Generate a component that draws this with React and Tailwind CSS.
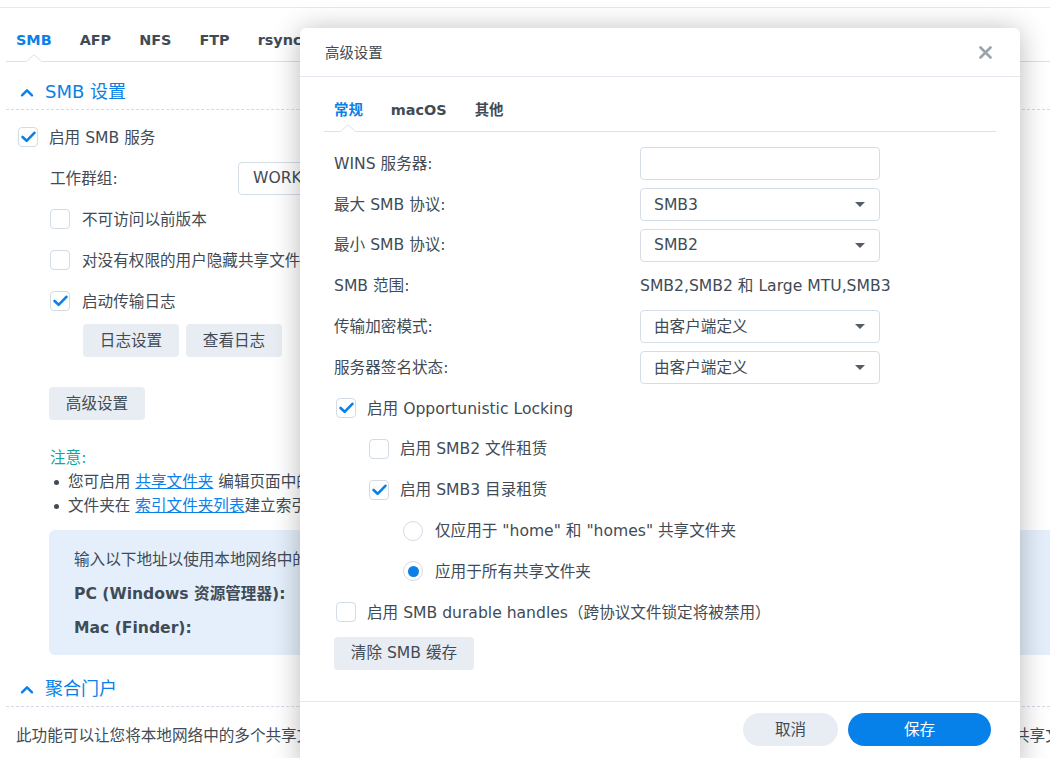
import React from "react";

function CheckMark() {
  return (
    <svg width="15" height="12" viewBox="0 0 15 12">
      <path d="M1.6 6 L5.6 9.8 L13.4 1.8" fill="none" stroke="#0a80e8" strokeWidth="2.6" strokeLinecap="round" strokeLinejoin="round" />
    </svg>
  );
}

function Checkbox({ checked }) {
  return (
    <span className="w-[20px] h-[20px] shrink-0 rounded-[4px] border border-[#d3dbe5] bg-white flex items-center justify-center">
      {checked && <CheckMark />}
    </span>
  );
}

function Radio({ checked }) {
  return (
    <span className="w-[20px] h-[20px] shrink-0 rounded-full border border-[#d3dbe5] bg-white flex items-center justify-center">
      {checked && <span className="w-[11px] h-[11px] rounded-full bg-[#0a80e8]" />}
    </span>
  );
}

function Caret() {
  return (
    <svg width="10" height="5" viewBox="0 0 10 5">
      <path d="M0 0 H10 L5 5 Z" fill="#545d67" />
    </svg>
  );
}

function Select({ value }) {
  return (
    <div className="w-[240px] h-[33px] rounded-[4px] border border-[#d5dde6] flex items-center justify-between pl-[13px] pr-[14px]">
      <span className="pt-[2px]">{value}</span>
      <Caret />
    </div>
  );
}

function Notch() {
  return (
    <svg className="absolute bottom-[-1px] left-1/2 -translate-x-1/2" width="16" height="8" viewBox="0 0 16 8">
      <rect x="0" y="6" width="16" height="2" fill="#ffffff" />
      <path d="M0.5 7.5 L8 0.8 L15.5 7.5" fill="#ffffff" stroke="#d9e1ea" strokeWidth="1" />
    </svg>
  );
}

function Chevron() {
  return (
    <svg width="14" height="9" viewBox="0 0 14 9">
      <path d="M2 7.3 L7 2.3 L12 7.3" fill="none" stroke="#0a80e8" strokeWidth="2.4" strokeLinecap="round" strokeLinejoin="round" />
    </svg>
  );
}

function SectionHeader({ title, height }) {
  return (
    <div className={"flex items-end pb-[5px] pl-[14px] gap-[11px] border-b border-dashed border-[#d2dae4] " + height}>
      <span className="h-[24px] flex items-center">
        <Chevron />
      </span>
      <span className="text-[18px] leading-[24px] text-[#0a80e8]">{title}</span>
    </div>
  );
}

function GrayButton({ children }) {
  return (
    <button className="h-[33px] w-[96px] pt-[2px] rounded-[4px] bg-[#e8edf3] text-[#414b55] flex items-center justify-center">
      {children}
    </button>
  );
}

function CheckRow({ checked, children, className }) {
  return (
    <div className={"h-[34px] flex items-center " + (className || "")}>
      <Checkbox checked={checked} />
      <span className="whitespace-nowrap pt-[3px]">{children}</span>
    </div>
  );
}

function BackgroundPage() {
  const tabs = ["SMB", "AFP", "NFS", "FTP", "rsync"];
  return (
    <div>
      <div className="h-[8px] border-b border-[#e6eaef]" />
      <div className="pl-[6px]">
        <div className="flex h-[54px] border-b border-[#d9e1ea] pl-[10px] gap-[28px] font-bold text-[14.4px]">
          {tabs.map((t, i) => (
            <div key={t} className={"relative pt-[21px] leading-[22px] " + (i === 0 ? "text-[#0a80e8]" : "text-[#414b55]")}>
              {t}
              {i === 0 && <Notch />}
            </div>
          ))}
        </div>

        <SectionHeader title="SMB 设置" height="h-[48px]" />

        <div className="pt-[10px] flex flex-col gap-[7px]">
          <CheckRow checked className="pl-[12px] gap-[11px]">启用 SMB 服务</CheckRow>
          <div className="h-[34px] flex items-center pl-[44px]">
            <span className="w-[188px] pt-[3px]">工作群组:</span>
            <div className="h-[33px] w-[400px] pt-[2px] rounded-[4px] border border-[#d5dde6] flex items-center pl-[14px]">WORKGROUP</div>
          </div>
          <CheckRow className="pl-[44px] gap-[12px]">不可访问以前版本</CheckRow>
          <CheckRow className="pl-[44px] gap-[12px]">对没有权限的用户隐藏共享文件夹</CheckRow>
          <CheckRow checked className="pl-[44px] gap-[12px]">启动传输日志</CheckRow>
        </div>

        <div className="mt-[6px] pl-[77px] flex gap-[7px]">
          <GrayButton>日志设置</GrayButton>
          <GrayButton>查看日志</GrayButton>
        </div>

        <div className="mt-[30px] pl-[43px]">
          <GrayButton>高级设置</GrayButton>
        </div>

        <div className="mt-[26px] pl-[44px] leading-[24px]">
          <div className="text-[#12a6a0]">注意:</div>
          <ul className="whitespace-nowrap">
            <li className="flex items-center">
              <span className="w-[5px] h-[5px] rounded-full bg-[#414b55] ml-[4px] mr-[9px]" />
              您可启用&nbsp;<a className="text-[#0a80e8] underline">共享文件夹</a>&nbsp;编辑页面中的高级权限，以便控制用户访问。
            </li>
            <li className="flex items-center">
              <span className="w-[5px] h-[5px] rounded-full bg-[#414b55] ml-[4px] mr-[9px]" />
              文件夹在&nbsp;<a className="text-[#0a80e8] underline">索引文件夹列表</a>建立索引后方可搜索。
            </li>
          </ul>
        </div>

        <div className="mt-[12px] ml-[43px] h-[125px] rounded-l-[6px] bg-[#e4effb] pt-[18px] pl-[25px] flex flex-col gap-[10px] leading-[24px] whitespace-nowrap">
          <div>输入以下地址以使用本地网络中的计算机访问共享文件夹：</div>
          <div className="font-bold">PC (Windows 资源管理器):</div>
          <div className="font-bold">Mac (Finder):</div>
        </div>

        <SectionHeader title="聚合门户" height="h-[52px]" />

        <div className="mt-[17px] pl-[10px] leading-[24px] whitespace-nowrap">
          此功能可以让您将本地网络中的多个共享文件夹整合到一个共享文件夹中。用户访问该入口，即可浏览来自多台服务器的文件，无需分别登录各个共享文件夹。
        </div>
      </div>
    </div>
  );
}

function FormRow({ label, children }) {
  return (
    <div className="h-[33px] flex items-center">
      <span className="w-[306px] shrink-0 pt-[2px]">{label}</span>
      {children}
    </div>
  );
}

function DialogCheck({ checked, indent, children }) {
  return (
    <div className={"h-[33px] flex items-center gap-[11px] " + indent}>
      <Checkbox checked={checked} />
      <span className="whitespace-nowrap pt-[2px]">{children}</span>
    </div>
  );
}

function DialogRadio({ checked, children }) {
  return (
    <div className="h-[33px] flex items-center gap-[12px] pl-[69px]">
      <Radio checked={checked} />
      <span className="whitespace-nowrap pt-[2px]">{children}</span>
    </div>
  );
}

function AdvancedDialog() {
  const tabs = ["常规", "macOS", "其他"];
  return (
    <div className="absolute left-[300px] top-[28px] w-[720px] h-[740px] bg-white rounded-t-[6px] shadow-[0_2px_28px_rgba(0,0,0,0.28)] flex flex-col">
      <div className="h-[49px] shrink-0 border-b border-[#e3e8ee] flex items-center justify-between pl-[25px] pr-[28px]">
        <span className="text-[14.4px] text-[#414b55] pt-[3px]">高级设置</span>
        <svg width="13" height="13" viewBox="0 0 13 13">
          <path d="M1.5 1.5 L11.5 11.5 M11.5 1.5 L1.5 11.5" stroke="#9aa2ab" strokeWidth="2.6" strokeLinecap="round" />
        </svg>
      </div>

      <div className="flex-1 px-[24px]">
        <div className="flex h-[55px] border-b border-[#d9e1ea] pl-[10px] gap-[28px] font-bold text-[14.4px]">
          {tabs.map((t, i) => (
            <div key={t} className={"relative pt-[22px] leading-[22px] " + (i === 0 ? "text-[#0a80e8]" : "text-[#414b55]")}>
              {t}
              {i === 0 && <Notch />}
            </div>
          ))}
        </div>

        <div className="mt-[15px] pl-[10px] flex flex-col gap-[7.8px]">
          <FormRow label="WINS 服务器:">
            <div className="w-[240px] h-[33px] rounded-[4px] border border-[#d5dde6]" />
          </FormRow>
          <FormRow label="最大 SMB 协议:">
            <Select value="SMB3" />
          </FormRow>
          <FormRow label="最小 SMB 协议:">
            <Select value="SMB2" />
          </FormRow>
          <FormRow label="SMB 范围:">
            <span className="whitespace-nowrap pt-[2px]">SMB2,SMB2 和 Large MTU,SMB3</span>
          </FormRow>
          <FormRow label="传输加密模式:">
            <Select value="由客户端定义" />
          </FormRow>
          <FormRow label="服务器签名状态:">
            <Select value="由客户端定义" />
          </FormRow>

          <DialogCheck checked indent="pl-[2px]">启用 Opportunistic Locking</DialogCheck>
          <DialogCheck indent="pl-[35px]">启用 SMB2 文件租赁</DialogCheck>
          <DialogCheck checked indent="pl-[35px]">启用 SMB3 目录租赁</DialogCheck>
          <DialogRadio>仅应用于 "home" 和 "homes" 共享文件夹</DialogRadio>
          <DialogRadio checked>应用于所有共享文件夹</DialogRadio>
          <DialogCheck indent="pl-[2px]">启用 SMB durable handles（跨协议文件锁定将被禁用）</DialogCheck>

          <div>
            <button className="h-[33px] w-[140px] pt-[2px] rounded-[4px] bg-[#e8edf3] text-[#414b55] flex items-center justify-center">
              清除 SMB 缓存
            </button>
          </div>
        </div>
      </div>

      <div className="h-[67px] shrink-0 border-t border-[#e3e8ee] flex items-start justify-end gap-[10px] pt-[11px] pr-[29px]">
        <button className="h-[33px] w-[95px] pt-[2px] rounded-full bg-[#e8edf3] text-[#414b55] flex items-center justify-center">取消</button>
        <button className="h-[33px] w-[143px] pt-[2px] rounded-full bg-[#0781ea] text-white flex items-center justify-center">保存</button>
      </div>
    </div>
  );
}

export default function App() {
  return (
    <div className="relative w-[1050px] h-[758px] overflow-hidden bg-white text-[#414b55] text-[15.6px] font-['DejaVu_Sans','Noto_Sans_CJK_SC',sans-serif]">
      <BackgroundPage />
      <AdvancedDialog />
    </div>
  );
}
